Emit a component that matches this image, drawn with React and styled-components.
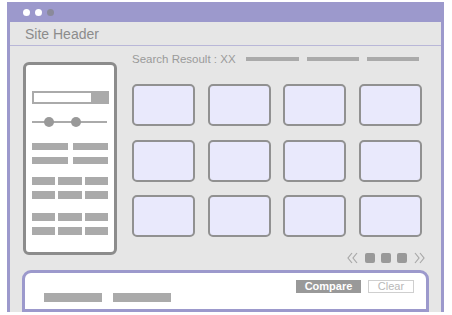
import React from 'react'
import styled, { createGlobalStyle } from 'styled-components'

const purple = '#9c99cc'
const panelGray = '#e6e6e6'
const blockGray = '#aaaaaa'

const GlobalStyle = createGlobalStyle`
  body {
    margin: 0;
    background: #ffffff;
    font-family: 'Liberation Sans', Arial, sans-serif;
  }
`

const Frame = styled.div`
  margin: 2px 0 0 7px;
  width: 437px;
  height: 310px;
  box-sizing: border-box;
  background: ${purple};
  padding: 0 3px;
  display: flex;
  flex-direction: column;
`

const TitleBar = styled.div`
  height: 20px;
  display: flex;
  align-items: center;
  gap: 5px;
  padding-left: 13px;
`

const Dot = styled.span`
  width: 7px;
  height: 7px;
  border-radius: 50%;
  background: ${p => (p.$dim ? '#8a8a9a' : '#ffffff')};
`

const Header = styled.div`
  height: 23px;
  background: ${panelGray};
  border-bottom: 1px solid #b9b7d8;
  display: flex;
  align-items: center;
  padding-left: 15px;
  font-size: 14px;
  color: #8c8c8c;
`

const Body = styled.div`
  flex: 1;
  background: ${panelGray};
  display: flex;
  flex-direction: column;
  overflow: hidden;
`

const Main = styled.div`
  display: flex;
  padding: 6px 0 0 13px;
  gap: 15px;
`

const FilterPanel = styled.div`
  margin-top: 10px;
  width: 94px;
  height: 193px;
  box-sizing: border-box;
  border: 3px solid #8c8c8c;
  border-radius: 6px;
  background: #ffffff;
  padding: 26px 6px 0 6px;
  display: flex;
  flex-direction: column;
`

const SearchBox = styled.div`
  height: 13px;
  width: 77px;
  box-sizing: border-box;
  border: 2px solid ${blockGray};
  display: flex;
  justify-content: flex-end;
`

const SearchButton = styled.span`
  width: 16px;
  background: ${blockGray};
`

const Slider = styled.div`
  position: relative;
  margin-top: 13px;
  height: 10px;
  width: 75px;
`

const Track = styled.div`
  position: absolute;
  left: 0;
  right: 0;
  top: 4px;
  height: 2px;
  background: ${blockGray};
`

const Knob = styled.span`
  position: absolute;
  top: 0;
  width: 10px;
  height: 10px;
  border-radius: 50%;
  background: #999999;
`

const BlockGroup = styled.div`
  margin-top: ${p => p.$gap}px;
  width: 76px;
  display: grid;
  grid-template-columns: repeat(${p => p.$cols}, 1fr);
  column-gap: ${p => (p.$cols === 2 ? 5 : 3)}px;
  row-gap: ${p => (p.$cols === 2 ? 7 : 6)}px;
`

const Block = styled.span`
  height: ${p => p.$h}px;
  background: ${blockGray};
`

const Results = styled.div`
  display: flex;
  flex-direction: column;
`

const SearchRow = styled.div`
  height: 14px;
  display: flex;
  align-items: center;
  font-size: 11.5px;
  color: #9a9a9a;
`

const Line = styled.span`
  width: ${p => p.$w}px;
  height: 4px;
  background: ${blockGray};
  margin-left: ${p => p.$ml}px;
`

const CardGrid = styled.div`
  margin-top: 18px;
  display: grid;
  grid-template-columns: repeat(4, 63px);
  grid-auto-rows: 42px;
  column-gap: 12.5px;
  row-gap: 13.5px;
`

const Card = styled.div`
  box-sizing: border-box;
  border: 2px solid #919191;
  border-radius: 5px;
  background: #e9e9fc;
`

const Pager = styled.div`
  margin-top: 15px;
  display: flex;
  align-items: center;
  justify-content: flex-end;
  gap: 6px;
  width: 293px;
`

const PageDot = styled.span`
  width: 10px;
  height: 10px;
  border-radius: 2px;
  background: #999999;
`

const Chevrons = ({ flip }) => (
  <svg width="12" height="12" viewBox="0 0 12 12" style={{ transform: flip ? 'scaleX(-1)' : 'none' }}>
    <path d="M5 1 L1 6 L5 11 M10 1 L6 6 L10 11" fill="none" stroke="#a8a8a8" strokeWidth="1.2" />
  </svg>
)

const CompareBar = styled.div`
  margin: auto 0 0 12px;
  width: 407px;
  height: 42px;
  box-sizing: border-box;
  border: 3px solid ${purple};
  border-radius: 9px 9px 0 0;
  background: #ffffff;
  padding: 7px 12px 0 19px;
  display: flex;
  flex-direction: column;
`

const ButtonRow = styled.div`
  display: flex;
  justify-content: flex-end;
  gap: 7px;
`

const Button = styled.button`
  height: 13px;
  width: ${p => p.$w}px;
  padding: 0;
  box-sizing: border-box;
  font-family: inherit;
  font-size: 11px;
  line-height: 11px;
  font-weight: ${p => (p.$primary ? 'bold' : 'normal')};
  color: ${p => (p.$primary ? '#ffffff' : '#b8b8b8')};
  background: ${p => (p.$primary ? '#999999' : '#ffffff')};
  border: ${p => (p.$primary ? 'none' : '1px solid #cfcfcf')};
`

const BarRow = styled.div`
  display: flex;
  gap: 11px;
`

const Bar = styled.span`
  width: 58px;
  height: 9px;
  background: ${blockGray};
`

export default function App() {
  return (
    <>
      <GlobalStyle />
      <Frame>
        <TitleBar>
          <Dot />
          <Dot />
          <Dot $dim />
        </TitleBar>
        <Header>Site Header</Header>
        <Body>
          <Main>
            <FilterPanel>
              <SearchBox>
                <SearchButton />
              </SearchBox>
              <Slider>
                <Track />
                <Knob style={{ left: 12 }} />
                <Knob style={{ left: 39 }} />
              </Slider>
              <BlockGroup $cols={2} $gap={16}>
                {Array.from({ length: 4 }, (_, i) => <Block key={i} $h={7} />)}
              </BlockGroup>
              <BlockGroup $cols={3} $gap={13}>
                {Array.from({ length: 6 }, (_, i) => <Block key={i} $h={8} />)}
              </BlockGroup>
              <BlockGroup $cols={3} $gap={14}>
                {Array.from({ length: 6 }, (_, i) => <Block key={i} $h={8} />)}
              </BlockGroup>
            </FilterPanel>
            <Results>
              <SearchRow>
                Search Resoult : XX
                <Line $w={53} $ml={10} />
                <Line $w={52} $ml={8} />
                <Line $w={52} $ml={8} />
              </SearchRow>
              <CardGrid>
                {Array.from({ length: 12 }, (_, i) => <Card key={i} />)}
              </CardGrid>
              <Pager>
                <Chevrons />
                <PageDot />
                <PageDot />
                <PageDot />
                <Chevrons flip />
              </Pager>
            </Results>
          </Main>
          <CompareBar>
            <ButtonRow>
              <Button $primary $w={65}>Compare</Button>
              <Button $w={46}>Clear</Button>
            </ButtonRow>
            <BarRow>
              <Bar />
              <Bar />
            </BarRow>
          </CompareBar>
        </Body>
      </Frame>
    </>
  )
}
